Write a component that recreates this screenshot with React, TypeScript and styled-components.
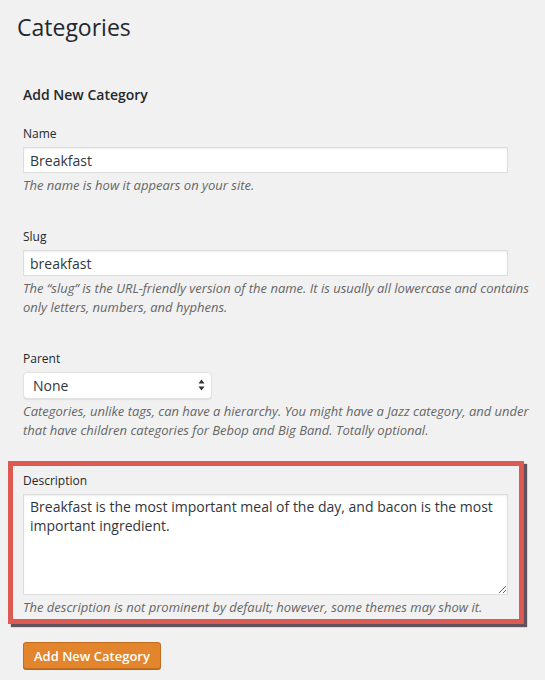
import React, { useState } from "react"
import styled, { createGlobalStyle } from "styled-components"

const GlobalStyle = createGlobalStyle`
  html, body {
    margin: 0;
    padding: 0;
    background: #f1f1f1;
    font-family: "Open Sans", "Liberation Sans", sans-serif;
    color: #23282d;
  }
  * {
    box-sizing: border-box;
  }
`

const Page = styled.main`
  min-height: 680px;
  padding: 12px 0 0 17px;
`

const Title = styled.h1`
  margin: 0;
  font-size: 23px;
  line-height: 30px;
  font-weight: 400;
  color: #23282d;
`

const Form = styled.form`
  display: flex;
  flex-direction: column;
  align-items: flex-start;
  width: 510px;
  margin-left: 6px;
`

const SectionTitle = styled.h2`
  margin: 44px 0 22px;
  font-size: 14px;
  line-height: 18px;
  font-weight: 600;
  color: #23282d;
`

const Field = styled.div<{ $after?: number }>`
  align-self: stretch;
  margin-bottom: ${({ $after }) => $after ?? 34}px;
`

const Label = styled.label`
  display: block;
  font-size: 12px;
  line-height: 16px;
  margin-bottom: 5px;
  color: #23282d;
`

const TextInput = styled.input`
  display: block;
  width: 485px;
  height: 26px;
  margin: 0;
  padding: 0 6px;
  border: 1px solid #dddddd;
  background: #fff;
  box-shadow: inset 0 1px 2px rgba(0, 0, 0, 0.07);
  font-family: inherit;
  font-size: 14px;
  color: #32373c;
  outline: none;
`

const SelectWrap = styled.div`
  position: relative;
  width: 189px;
`

const Select = styled.select`
  display: block;
  width: 100%;
  height: 27px;
  margin: 0;
  padding: 0 24px 0 9px;
  border: 1px solid #e2e2e2;
  border-radius: 4px;
  background: #fff;
  box-shadow: 0 1px 1px rgba(0, 0, 0, 0.08);
  appearance: none;
  font-family: inherit;
  font-size: 14px;
  color: #32373c;
  outline: none;
`

const SelectArrows = styled.svg`
  position: absolute;
  right: 7px;
  top: 7px;
  pointer-events: none;
`

const TextArea = styled.textarea`
  display: block;
  width: 485px;
  height: 101px;
  margin: 0;
  padding: 2px 6px;
  border: 1px solid #dddddd;
  background: #fff;
  box-shadow: inset 0 1px 2px rgba(0, 0, 0, 0.07);
  font-family: inherit;
  font-size: 14px;
  line-height: 19px;
  color: #32373c;
  outline: none;
  resize: both;
`

const Help = styled.p`
  margin: 3px 0 0;
  font-size: 13px;
  line-height: 19px;
  font-style: italic;
  color: #666666;
`

const Highlight = styled.div`
  align-self: stretch;
  margin: 0 9px 0 -15px;
  padding: 7px 11px 2px 10px;
  border: 5px solid #dd5a52;
  box-shadow: 3px 3px 1px rgba(70, 55, 70, 0.85);
`

const SubmitButton = styled.button`
  margin-top: 18px;
  height: 27px;
  padding: 0 10px;
  border: 1px solid #c46f1f;
  border-radius: 3px;
  background: #e2852d;
  box-shadow: 0 1px 0 #b5651c;
  font-family: inherit;
  font-size: 13px;
  font-weight: 600;
  color: #fff;
  cursor: pointer;
`

export default function App() {
  const [name, setName] = useState("Breakfast")
  const [slug, setSlug] = useState("breakfast")
  const [parent, setParent] = useState("none")
  const [desc, setDesc] = useState(
    "Breakfast is the most important meal of the day, and bacon is the most important ingredient."
  )

  return (
    <>
      <GlobalStyle />
      <Page>
        <Title>Categories</Title>
        <Form onSubmit={(e) => e.preventDefault()}>
          <SectionTitle>Add New Category</SectionTitle>

          <Field>
            <Label htmlFor="tag-name">Name</Label>
            <TextInput
              id="tag-name"
              value={name}
              onChange={(e) => setName(e.target.value)}
            />
            <Help>The name is how it appears on your site.</Help>
          </Field>

          <Field>
            <Label htmlFor="tag-slug">Slug</Label>
            <TextInput
              id="tag-slug"
              value={slug}
              onChange={(e) => setSlug(e.target.value)}
            />
            <Help>
              The “slug” is the URL-friendly version of the name. It is usually
              all lowercase and contains only letters, numbers, and hyphens.
            </Help>
          </Field>

          <Field $after={21}>
            <Label htmlFor="parent">Parent</Label>
            <SelectWrap>
              <Select
                id="parent"
                value={parent}
                onChange={(e) => setParent(e.target.value)}
              >
                <option value="none">None</option>
                <option value="lunch">Lunch</option>
                <option value="dinner">Dinner</option>
              </Select>
              <SelectArrows width="7" height="12" viewBox="0 0 7 12">
                <path d="M3.5 0.5 L6.5 4.5 L0.5 4.5 Z" fill="#333" />
                <path d="M3.5 11.5 L6.5 7.5 L0.5 7.5 Z" fill="#333" />
              </SelectArrows>
            </SelectWrap>
            <Help>
              Categories, unlike tags, can have a hierarchy. You might have a
              Jazz category, and under that have children categories for Bebop
              and Big Band. Totally optional.
            </Help>
          </Field>

          <Highlight>
            <Label htmlFor="tag-description">Description</Label>
            <TextArea
              id="tag-description"
              value={desc}
              onChange={(e) => setDesc(e.target.value)}
            />
            <Help>
              The description is not prominent by default; however, some themes
              may show it.
            </Help>
          </Highlight>

          <SubmitButton type="submit">Add New Category</SubmitButton>
        </Form>
      </Page>
    </>
  )
}
